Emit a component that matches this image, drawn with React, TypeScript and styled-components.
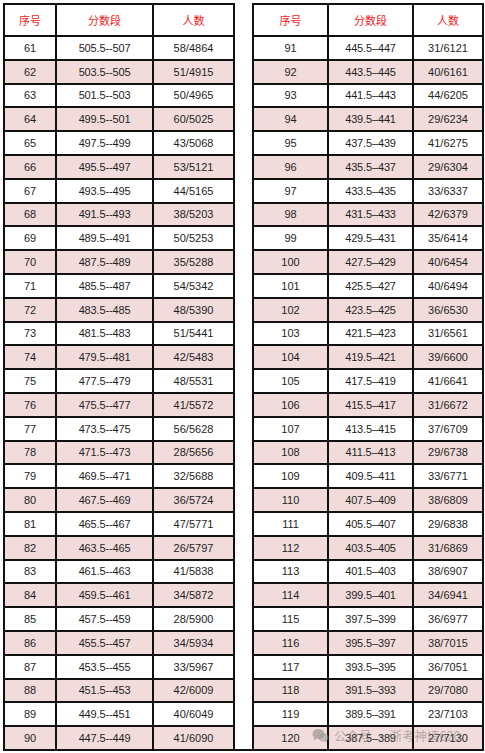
import React from 'react';
import styled, { createGlobalStyle } from 'styled-components';

const GlobalStyle = createGlobalStyle`
  html, body {
    margin: 0;
    padding: 0;
    background: #ffffff;
  }
  body {
    font-family: "Liberation Sans", Arial, "Noto Sans CJK SC", sans-serif;
  }
`;

type Row = { no: number; range: string; count: string };

const leftCounts = [
  '58/4864', '51/4915', '50/4965', '60/5025', '43/5068', '53/5121', '44/5165', '38/5203', '50/5253', '35/5288',
  '54/5342', '48/5390', '51/5441', '42/5483', '48/5531', '41/5572', '56/5628', '28/5656', '32/5688', '36/5724',
  '47/5771', '26/5797', '41/5838', '34/5872', '28/5900', '34/5934', '33/5967', '42/6009', '40/6049', '41/6090',
];

const rightCounts = [
  '31/6121', '40/6161', '44/6205', '29/6234', '41/6275', '29/6304', '33/6337', '42/6379', '35/6414', '40/6454',
  '40/6494', '36/6530', '31/6561', '39/6600', '41/6641', '31/6672', '37/6709', '29/6738', '33/6771', '38/6809',
  '29/6838', '31/6869', '38/6907', '34/6941', '36/6977', '38/7015', '36/7051', '29/7080', '23/7103', '27/7130',
];

const buildRows = (startNo: number, startLow: number, dash: string, counts: string[]): Row[] =>
  counts.map((count, i) => {
    const low = startLow - 2 * i;
    return {
      no: startNo + i,
      range: `${low.toFixed(1)}${dash}${low + 1.5}`,
      count,
    };
  });

const leftRows = buildRows(61, 505.5, '--', leftCounts);
const rightRows = buildRows(91, 445.5, '–', rightCounts);

const Page = styled.div`
  position: relative;
  display: flex;
  padding: 3px 0 0 3px;
  width: 485px;
  height: 753px;
  box-sizing: border-box;
  overflow: hidden;
`;

const Table = styled.div<{ $cols: string }>`
  display: grid;
  grid-template-columns: ${(p) => p.$cols};
  grid-template-rows: 30px repeat(30, 1fr);
  gap: 2px;
  padding: 2px;
  height: 748px;
  box-sizing: border-box;
  background: #111111;
`;

const Spacer = styled.div`
  width: 17px;
  height: 748px;
  box-sizing: border-box;
  border-bottom: 2px solid #111111;
`;

const HeadCell = styled.div`
  display: flex;
  align-items: center;
  justify-content: center;
  background: #ffffff;
  color: #f01c1c;
  font-family: "Noto Sans CJK SC", "Liberation Sans", sans-serif;
  font-size: 11px;
`;

const Cell = styled.div<{ $pink: boolean }>`
  display: flex;
  align-items: center;
  justify-content: center;
  background: ${(p) => (p.$pink ? '#f2dcdb' : '#ffffff')};
  color: #1e1e1e;
  font-size: 11px;
`;

const Range = styled.span`
  letter-spacing: -0.15px;
`;

const Watermark = styled.div`
  position: absolute;
  left: 312px;
  top: 726px;
  display: flex;
  align-items: center;
  gap: 5px;
  color: rgba(120, 120, 120, 0.55);
  font-family: "Noto Sans CJK SC", sans-serif;
  font-size: 12.5px;
  pointer-events: none;
`;

const WeChatIcon = () => (
  <svg width="17" height="15" viewBox="0 0 34 30" fill="rgba(120,120,120,0.5)">
    <ellipse cx="13" cy="12" rx="12" ry="10" />
    <path d="M5 19 L3 25 L10 21 Z" />
    <ellipse cx="23" cy="19" rx="10" ry="8.5" fill="rgba(150,150,150,0.55)" />
    <path d="M29 25 L31 29 L25 26 Z" fill="rgba(150,150,150,0.55)" />
  </svg>
);

const ScoreTable = ({ rows, cols }: { rows: Row[]; cols: string }) => (
  <Table $cols={cols}>
    <HeadCell>序号</HeadCell>
    <HeadCell>分数段</HeadCell>
    <HeadCell>人数</HeadCell>
    {rows.map((r, i) => (
      <React.Fragment key={r.no}>
        <Cell $pink={i % 2 === 1}>{r.no}</Cell>
        <Cell $pink={i % 2 === 1}>
          <Range>{r.range}</Range>
        </Cell>
        <Cell $pink={i % 2 === 1}>{r.count}</Cell>
      </React.Fragment>
    ))}
  </Table>
);

export default function App() {
  return (
    <>
      <GlobalStyle />
      <Page>
        <ScoreTable rows={leftRows} cols="50px 95px 79px" />
        <Spacer />
        <ScoreTable rows={rightRows} cols="73px 83px 68px" />
        <Watermark>
          <WeChatIcon />
          <span>公众号 · 浙考神墙620</span>
        </Watermark>
      </Page>
    </>
  );
}
